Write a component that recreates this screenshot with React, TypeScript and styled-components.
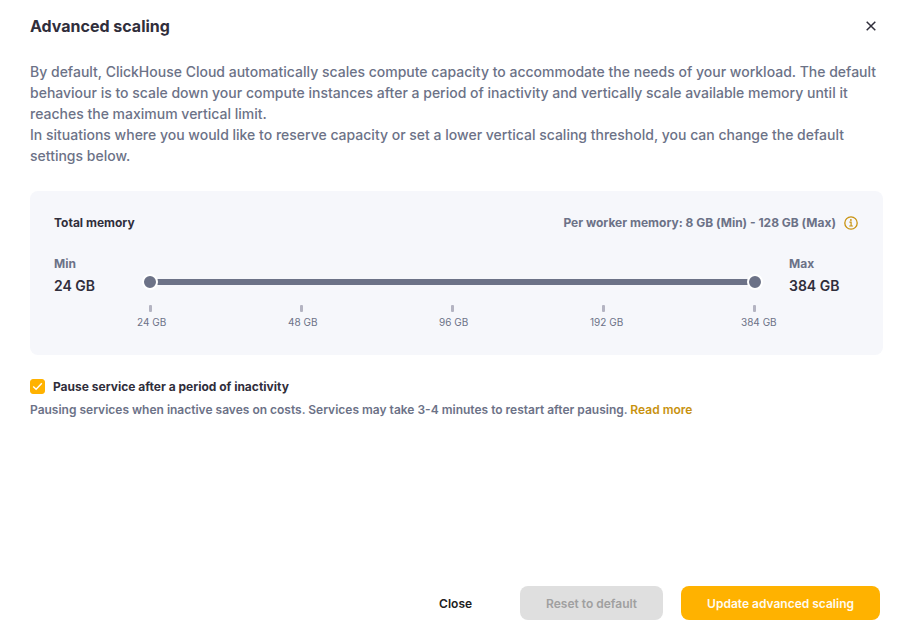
import React, { useState } from "react";
import styled, { createGlobalStyle } from "styled-components";

const color = {
  ink: "#302e3b",
  muted: "#6c7287",
  panel: "#f6f7fb",
  tick: "#b4b4c2",
  accent: "#ffb200",
  link: "#c8920f",
};

const GlobalStyle = createGlobalStyle`
  *, *::before, *::after { box-sizing: border-box; }
  body {
    margin: 0;
    background: #ffffff;
    color: ${color.ink};
    font-family: Inter, "Liberation Sans", sans-serif;
  }
  button, input { font-family: inherit; }
`;

const Dialog = styled.main`
  display: flex;
  flex-direction: column;
  min-height: 100vh;
  padding: 14px 31px 23px 30px;
`;

const Header = styled.header`
  display: flex;
  align-items: center;
  justify-content: space-between;
`;

const Title = styled.h1`
  margin: 0;
  font-size: 16px;
  line-height: 24px;
  font-weight: 700;
`;

const IconButton = styled.button`
  display: flex;
  align-items: center;
  justify-content: center;
  width: 24px;
  height: 24px;
  padding: 0;
  border: 0;
  background: none;
  color: ${color.ink};
  cursor: pointer;
`;

const Description = styled.p`
  margin: 23px 0 0;
  color: ${color.muted};
  font-size: 14px;
  line-height: 21px;
  font-weight: 500;
`;

const Panel = styled.section`
  margin-top: 25px;
  padding: 24px 24px 25px;
  border-radius: 8px;
  background: ${color.panel};
`;

const PanelHeader = styled.div`
  display: flex;
  align-items: center;
  justify-content: space-between;
  font-size: 12px;
  line-height: 16px;
  font-weight: 700;
`;

const PanelTitle = styled.h2`
  margin: 0;
  font: inherit;
`;

const WorkerMemory = styled.span`
  display: flex;
  align-items: center;
  gap: 7px;
  color: ${color.muted};
`;

const InfoButton = styled(IconButton)`
  width: 16px;
  height: 16px;
  color: ${color.link};
`;

const SliderRow = styled.div`
  display: flex;
  margin-top: 24px;
`;

const Bound = styled.div<{ $width: number; $inset?: number }>`
  flex: 0 0 ${(p) => p.$width}px;
  padding-left: ${(p) => p.$inset ?? 0}px;
`;

const BoundLabel = styled.div`
  color: ${color.muted};
  font-size: 12px;
  line-height: 18px;
  font-weight: 700;
`;

const BoundValue = styled.div`
  padding-top: 2px;
  font-size: 14px;
  line-height: 21px;
  font-weight: 600;
`;

const SliderArea = styled.div`
  flex: 1;
  min-width: 0;
  padding-top: 19px;
`;

const Track = styled.div`
  display: grid;
  align-items: center;
  height: 16px;
  margin: 0 5px;
`;

const Rail = styled.div`
  grid-area: 1 / 1;
  height: 6px;
  margin: 0 8px;
  background: #d6d8e2;
`;

const Fill = styled.div`
  height: 6px;
  background: ${color.muted};
`;

const Range = styled.input`
  grid-area: 1 / 1;
  width: 100%;
  height: 16px;
  margin: 0;
  appearance: none;
  background: none;
  pointer-events: none;

  &::-webkit-slider-thumb {
    appearance: none;
    width: 16px;
    height: 16px;
    border: 2px solid #ffffff;
    border-radius: 50%;
    background: ${color.muted};
    pointer-events: auto;
    cursor: pointer;
  }
`;

const Ticks = styled.div`
  display: flex;
  justify-content: space-between;
  margin-top: 15px;
`;

const Tick = styled.div`
  display: flex;
  flex-direction: column;
  width: 27px;
  color: ${color.muted};
  font-size: 10px;
  line-height: 15px;
  white-space: nowrap;
`;

const TickMark = styled.span`
  width: 3px;
  height: 7px;
  margin: 0 auto 3px;
  border-radius: 1px;
  background: ${color.tick};
`;

const PauseLabel = styled.label`
  display: flex;
  align-items: center;
  align-self: flex-start;
  gap: 8px;
  margin-top: 23px;
  font-size: 12px;
  line-height: 17px;
  font-weight: 700;
  cursor: pointer;
`;

const CheckSlot = styled.span`
  display: grid;
  place-items: center;
  width: 15px;
  height: 15px;

  svg {
    grid-area: 1 / 1;
    pointer-events: none;
  }
`;

const Checkbox = styled.input`
  grid-area: 1 / 1;
  width: 15px;
  height: 15px;
  margin: 0;
  appearance: none;
  border: 1px solid ${color.tick};
  border-radius: 3px;
  background: #ffffff;

  &:checked {
    border-color: ${color.accent};
    background: ${color.accent};
  }
`;

const Hint = styled.p`
  margin: 6px 0 0;
  color: ${color.muted};
  font-size: 12px;
  line-height: 18px;
  font-weight: 600;
`;

const Link = styled.a`
  color: ${color.link};
  text-decoration: none;
`;

const Footer = styled.footer`
  display: flex;
  justify-content: flex-end;
  gap: 18px;
  margin-top: auto;
  padding: 24px 3px 0 0;
`;

const variants = {
  plain: { background: "transparent", color: "#212121", padding: 30 },
  primary: { background: color.accent, color: "#fffbf0", padding: 26 },
  disabled: { background: "#dfdfdf", color: "#a0a0a0", padding: 26 },
};

const Button = styled.button<{ $variant: keyof typeof variants }>`
  height: 34px;
  padding: 1px ${(p) => variants[p.$variant].padding}px 0;
  border: 0;
  border-radius: 8px;
  background: ${(p) => variants[p.$variant].background};
  color: ${(p) => variants[p.$variant].color};
  font-size: 12px;
  line-height: 18px;
  font-weight: 600;
  cursor: ${(p) => (p.$variant === "disabled" ? "default" : "pointer")};
`;

const steps = [24, 48, 96, 192, 384];
const last = steps.length - 1;

export default function App() {
  const [min, setMin] = useState(0);
  const [max, setMax] = useState(last);
  const [pause, setPause] = useState(true);

  return (
    <>
      <GlobalStyle />
      <Dialog>
        <Header>
          <Title>Advanced scaling</Title>
          <IconButton type="button" aria-label="Close dialog">
            <svg width="10" height="10" viewBox="0 0 10 10" fill="none" stroke="currentColor" strokeWidth="1.5">
              <path d="M0.7 0.7 9.3 9.3M9.3 0.7 0.7 9.3" />
            </svg>
          </IconButton>
        </Header>

        <Description>
          By default, ClickHouse Cloud automatically scales compute capacity to accommodate the needs of your
          workload. The default behaviour is to scale down your compute instances after a period of inactivity and
          vertically scale available memory until it reaches the maximum vertical limit.
          <br />
          In situations where you would like to reserve capacity or set a lower vertical scaling threshold, you can
          change the default settings below.
        </Description>

        <Panel>
          <PanelHeader>
            <PanelTitle>Total memory</PanelTitle>
            <WorkerMemory>
              Per worker memory: 8 GB (Min) - 128 GB (Max)
              <InfoButton type="button" aria-label="About worker memory">
                <svg width="14" height="14" viewBox="0 0 14 14" fill="none" stroke="currentColor">
                  <circle cx="7" cy="7" r="6.2" strokeWidth="1.3" />
                  <path d="M5.4 6.1H7.1V10M5.2 10H8.9" strokeWidth="1.2" />
                  <circle cx="6.9" cy="4" r="0.9" fill="currentColor" stroke="none" />
                </svg>
              </InfoButton>
            </WorkerMemory>
          </PanelHeader>

          <SliderRow>
            <Bound $width={83}>
              <BoundLabel>Min</BoundLabel>
              <BoundValue>{steps[min]} GB</BoundValue>
            </Bound>
            <SliderArea>
              <Track>
                <Rail>
                  <Fill
                    style={{
                      marginLeft: `${(min / last) * 100}%`,
                      marginRight: `${100 - (max / last) * 100}%`,
                    }}
                  />
                </Rail>
                <Range
                  type="range"
                  aria-label="Minimum memory"
                  min={0}
                  max={last}
                  value={min}
                  onChange={(e) => setMin(Math.min(Number(e.target.value), max))}
                />
                <Range
                  type="range"
                  aria-label="Maximum memory"
                  min={0}
                  max={last}
                  value={max}
                  onChange={(e) => setMax(Math.max(Number(e.target.value), min))}
                />
              </Track>
              <Ticks>
                {steps.map((step) => (
                  <Tick key={step}>
                    <TickMark />
                    {step} GB
                  </Tick>
                ))}
              </Ticks>
            </SliderArea>
            <Bound $width={91} $inset={21}>
              <BoundLabel>Max</BoundLabel>
              <BoundValue>{steps[max]} GB</BoundValue>
            </Bound>
          </SliderRow>
        </Panel>

        <PauseLabel>
          <CheckSlot>
            <Checkbox type="checkbox" checked={pause} onChange={(e) => setPause(e.target.checked)} />
            {pause && (
              <svg width="11" height="9" viewBox="0 0 11 9" fill="none" stroke="#ffffff" strokeWidth="1.4">
                <path d="M1.2 4.4 4.1 7.2 9.8 1.3" />
              </svg>
            )}
          </CheckSlot>
          Pause service after a period of inactivity
        </PauseLabel>
        <Hint>
          Pausing services when inactive saves on costs. Services may take 3-4 minutes to restart after pausing.{" "}
          <Link href="#read-more">Read more</Link>
        </Hint>

        <Footer>
          <Button type="button" $variant="plain">
            Close
          </Button>
          <Button type="button" $variant="disabled" disabled>
            Reset to default
          </Button>
          <Button type="button" $variant="primary">
            Update advanced scaling
          </Button>
        </Footer>
      </Dialog>
    </>
  );
}
